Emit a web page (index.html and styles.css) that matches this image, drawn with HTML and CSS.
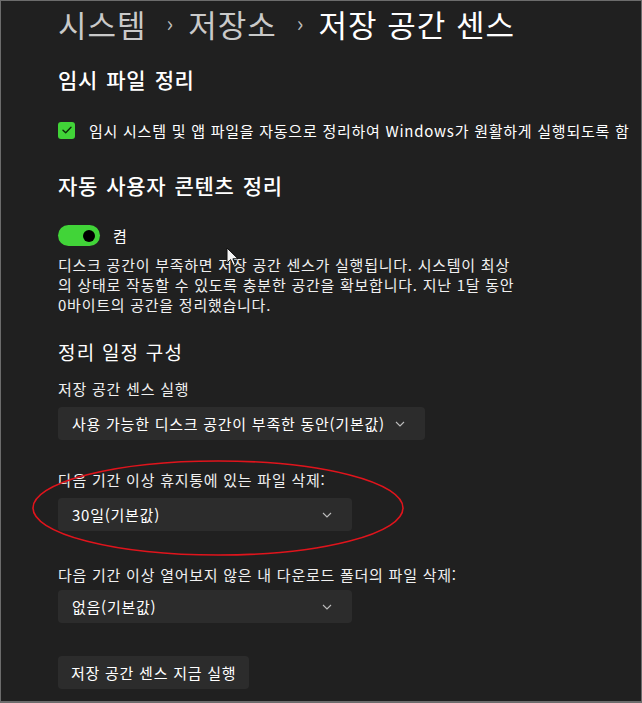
FILE: index.html
```html
<!DOCTYPE html>
<html lang="ko">
<head>
  <meta charset="UTF-8">
  <title>저장 공간 센스</title>
  <link rel="stylesheet" href="styles.css">
</head>
<body>
  <div class="window">
    <div class="content">
      <div class="crumbs">
        <span class="crumb">시스템</span>
        <span class="sep">›</span>
        <span class="crumb">저장소</span>
        <span class="sep">›</span>
        <span class="crumb current">저장 공간 센스</span>
      </div>

      <h2 class="section">임시 파일 정리</h2>
      <div class="check-row">
        <span class="checkbox">
          <svg width="10" height="8" viewBox="0 0 10 8"><path d="M1 4.2 L3.7 6.8 L9 1.2" fill="none" stroke="#0b2a08" stroke-width="1.4" stroke-linecap="round" stroke-linejoin="round"/></svg>
        </span>
        <span>임시 시스템 및 앱 파일을 자동으로 정리하여 Windows가 원활하게 실행되도록 함</span>
      </div>

      <h2 class="section second">자동 사용자 콘텐츠 정리</h2>
      <div class="toggle-row">
        <span class="toggle"><span class="knob"></span></span>
        <span>켬</span>
      </div>
      <p class="desc">디스크 공간이 부족하면 저장 공간 센스가 실행됩니다. 시스템이 최상<br>의 상태로 작동할 수 있도록 충분한 공간을 확보합니다. 지난 1달 동안<br>0바이트의 공간을 정리했습니다.</p>

      <h3 class="sub">정리 일정 구성</h3>

      <div class="field">
        <div class="label">저장 공간 센스 실행</div>
        <div class="select wide">
          <span>사용 가능한 디스크 공간이 부족한 동안(기본값)</span>
          <svg class="chev" width="10" height="6" viewBox="0 0 10 6"><path d="M1 1 L5 5 L9 1" fill="none" stroke="#bdbdbd" stroke-width="1.1"/></svg>
        </div>
      </div>

      <div class="field">
        <div class="label">다음 기간 이상 휴지통에 있는 파일 삭제:</div>
        <div class="select">
          <span>30일(기본값)</span>
          <svg class="chev" width="10" height="6" viewBox="0 0 10 6"><path d="M1 1 L5 5 L9 1" fill="none" stroke="#bdbdbd" stroke-width="1.1"/></svg>
        </div>
      </div>

      <div class="field last">
        <div class="label">다음 기간 이상 열어보지 않은 내 다운로드 폴더의 파일 삭제:</div>
        <div class="select">
          <span>없음(기본값)</span>
          <svg class="chev" width="10" height="6" viewBox="0 0 10 6"><path d="M1 1 L5 5 L9 1" fill="none" stroke="#bdbdbd" stroke-width="1.1"/></svg>
        </div>
      </div>

      <button class="run">저장 공간 센스 지금 실행</button>
    </div>

    <svg class="mark" width="380" height="100" viewBox="0 0 380 100">
      <ellipse cx="187" cy="49" rx="185" ry="47" fill="none" stroke="#e0141c" stroke-width="1.6"/>
    </svg>

    <svg class="cursor" width="14" height="20" viewBox="0 0 14 20">
      <path d="M1 1 L1 16 L4.6 12.6 L7.2 18.4 L9.4 17.4 L6.9 11.8 L12 11.8 Z" fill="#f4f4f4" stroke="#111" stroke-width="1"/>
    </svg>
  </div>
</body>
</html>
```

FILE: styles.css
```css
html, body {
  margin: 0;
  padding: 0;
}

body {
  background: #202020;
  font-family: "Noto Sans CJK KR", "Noto Sans", sans-serif;
  color: #ffffff;
}

.window {
  position: relative;
  box-sizing: border-box;
  width: 642px;
  height: 703px;
  border: 1px solid #6c6c6c;
  border-bottom-width: 2px;
  background: #202020;
  overflow: hidden;
}

.content {
  padding: 0 0 0 57px;
  font-size: 15px;
  letter-spacing: 0.75px;
}

.crumbs {
  display: flex;
  align-items: center;
  height: 48px;
  margin-top: -2px;
  font-size: 31px;
  letter-spacing: 1px;
  color: #c9c9c9;
}

.sep {
  font-size: 22px;
  margin: 0 14px 0 20px;
  position: relative;
  top: -1px;
  color: #bdbdbd;
}

.crumb.current {
  color: #ffffff;
}

.section {
  margin: 18px 0 0;
  font-size: 21px;
  font-weight: 500;
  letter-spacing: 0.6px;
  word-spacing: 2px;
  line-height: 28px;
}

.section.second {
  margin-top: 31px;
}

.check-row {
  display: flex;
  align-items: center;
  gap: 14px;
  margin-top: 27px;
  height: 20px;
  white-space: nowrap;
}

.checkbox {
  display: flex;
  align-items: center;
  justify-content: center;
  width: 17px;
  height: 17px;
  border-radius: 3px;
  background: #41d438;
  flex: none;
}

.toggle-row {
  display: flex;
  align-items: center;
  gap: 13px;
  margin-top: 26px;
}

.toggle {
  display: flex;
  align-items: center;
  justify-content: flex-end;
  box-sizing: border-box;
  width: 42px;
  height: 21px;
  border-radius: 11px;
  background: #41d438;
  padding-right: 5px;
}

.knob {
  width: 12px;
  height: 12px;
  border-radius: 50%;
  background: #000000;
}

.desc {
  margin: 9px 0 0;
  width: 500px;
  line-height: 20px;
  color: #f0f0f0;
}

.sub {
  margin: 24px 0 0;
  font-size: 19px;
  font-weight: 400;
  letter-spacing: 1.2px;
  line-height: 26px;
}

.field {
  margin-top: 14px;
}

.field + .field {
  margin-top: 30px;
}

.field.last {
  margin-top: 34px;
}

.label {
  line-height: 20px;
  color: #f0f0f0;
}

.select {
  display: flex;
  align-items: center;
  justify-content: space-between;
  box-sizing: border-box;
  width: 294px;
  height: 33px;
  margin-top: 8px;
  padding: 0 20px 0 14px;
  border-radius: 4px;
  background: #2c2c2c;
}

.field.last .select {
  margin-top: 5px;
}

.select.wide {
  width: 367px;
}

.run {
  display: block;
  margin-top: 33px;
  height: 33px;
  padding: 0 13px;
  border: none;
  border-radius: 4px;
  background: #2c2c2c;
  color: #ffffff;
  font-family: inherit;
  font-size: 15px;
  letter-spacing: 0.75px;
}

.mark {
  position: absolute;
  left: 30px;
  top: 458px;
}

.cursor {
  position: absolute;
  left: 225px;
  top: 246px;
}
```
